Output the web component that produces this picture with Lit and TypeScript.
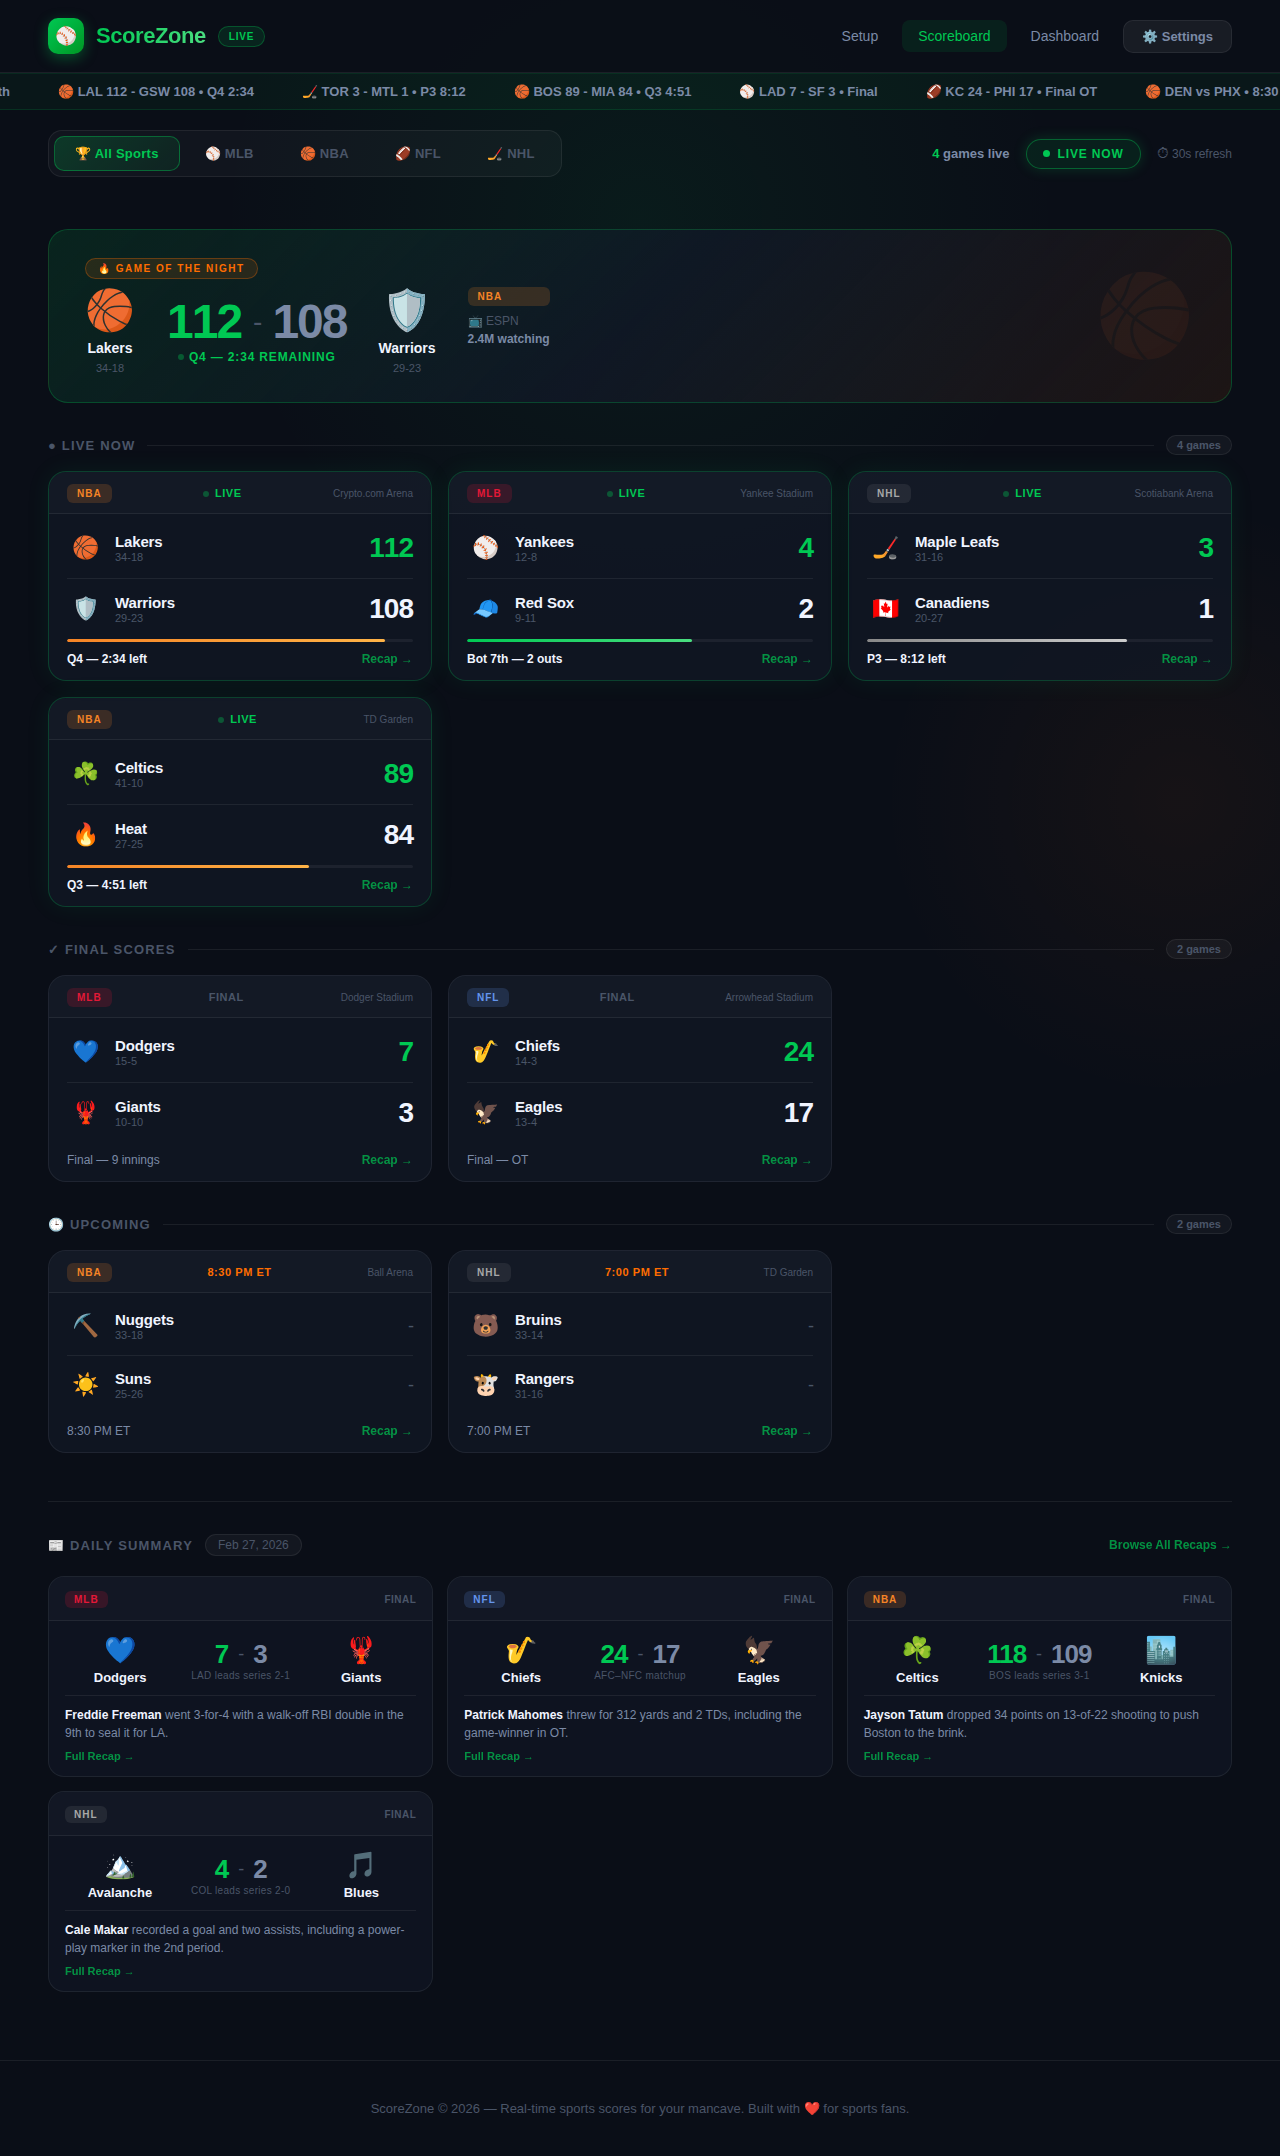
import { LitElement, html, css, nothing } from "lit";
import { customElement, property, state } from "lit/decorators.js";
import { classMap } from "lit/directives/class-map.js";

type League = "NBA" | "MLB" | "NFL" | "NHL";
type Status = "live" | "final" | "upcoming";

interface Team {
  icon: string;
  name: string;
  record?: string;
  score?: number;
}

interface Game {
  league: League;
  status: Status;
  label: string;
  venue: string;
  detail: string;
  progress?: number;
  teams: [Team, Team];
}

interface Recap {
  league: League;
  teams: [Team, Team];
  series: string;
  player: string;
  text: string;
}

const TICKER = [
  "⚾ NYY 4 - BOS 2 • Bot 7th",
  "🏀 LAL 112 - GSW 108 • Q4 2:34",
  "🏒 TOR 3 - MTL 1 • P3 8:12",
  "🏀 BOS 89 - MIA 84 • Q3 4:51",
  "⚾ LAD 7 - SF 3 • Final",
  "🏈 KC 24 - PHI 17 • Final OT",
  "🏀 DEN vs PHX • 8:30 PM ET",
];

const TABS = ["🏆 All Sports", "⚾ MLB", "🏀 NBA", "🏈 NFL", "🏒 NHL"];

const GAMES: Game[] = [
  {
    league: "NBA", status: "live", label: "LIVE", venue: "Crypto.com Arena", detail: "Q4 — 2:34 left", progress: 92,
    teams: [
      { icon: "🏀", name: "Lakers", record: "34-18", score: 112 },
      { icon: "🛡️", name: "Warriors", record: "29-23", score: 108 },
    ],
  },
  {
    league: "MLB", status: "live", label: "LIVE", venue: "Yankee Stadium", detail: "Bot 7th — 2 outs", progress: 65,
    teams: [
      { icon: "⚾", name: "Yankees", record: "12-8", score: 4 },
      { icon: "🧢", name: "Red Sox", record: "9-11", score: 2 },
    ],
  },
  {
    league: "NHL", status: "live", label: "LIVE", venue: "Scotiabank Arena", detail: "P3 — 8:12 left", progress: 75,
    teams: [
      { icon: "🏒", name: "Maple Leafs", record: "31-16", score: 3 },
      { icon: "🇨🇦", name: "Canadiens", record: "20-27", score: 1 },
    ],
  },
  {
    league: "NBA", status: "live", label: "LIVE", venue: "TD Garden", detail: "Q3 — 4:51 left", progress: 70,
    teams: [
      { icon: "☘️", name: "Celtics", record: "41-10", score: 89 },
      { icon: "🔥", name: "Heat", record: "27-25", score: 84 },
    ],
  },
  {
    league: "MLB", status: "final", label: "FINAL", venue: "Dodger Stadium", detail: "Final — 9 innings",
    teams: [
      { icon: "💙", name: "Dodgers", record: "15-5", score: 7 },
      { icon: "🦞", name: "Giants", record: "10-10", score: 3 },
    ],
  },
  {
    league: "NFL", status: "final", label: "FINAL", venue: "Arrowhead Stadium", detail: "Final — OT",
    teams: [
      { icon: "🎷", name: "Chiefs", record: "14-3", score: 24 },
      { icon: "🦅", name: "Eagles", record: "13-4", score: 17 },
    ],
  },
  {
    league: "NBA", status: "upcoming", label: "8:30 PM ET", venue: "Ball Arena", detail: "8:30 PM ET",
    teams: [
      { icon: "⛏️", name: "Nuggets", record: "33-18" },
      { icon: "☀️", name: "Suns", record: "25-26" },
    ],
  },
  {
    league: "NHL", status: "upcoming", label: "7:00 PM ET", venue: "TD Garden", detail: "7:00 PM ET",
    teams: [
      { icon: "🐻", name: "Bruins", record: "33-14" },
      { icon: "🐮", name: "Rangers", record: "31-16" },
    ],
  },
];

const SECTIONS: { status: Status; title: string }[] = [
  { status: "live", title: "● LIVE NOW" },
  { status: "final", title: "✓ FINAL SCORES" },
  { status: "upcoming", title: "🕒 UPCOMING" },
];

const RECAPS: Recap[] = [
  {
    league: "MLB", series: "LAD leads series 2-1", player: "Freddie Freeman",
    text: "went 3-for-4 with a walk-off RBI double in the 9th to seal it for LA.",
    teams: [{ icon: "💙", name: "Dodgers", score: 7 }, { icon: "🦞", name: "Giants", score: 3 }],
  },
  {
    league: "NFL", series: "AFC–NFC matchup", player: "Patrick Mahomes",
    text: "threw for 312 yards and 2 TDs, including the game-winner in OT.",
    teams: [{ icon: "🎷", name: "Chiefs", score: 24 }, { icon: "🦅", name: "Eagles", score: 17 }],
  },
  {
    league: "NBA", series: "BOS leads series 3-1", player: "Jayson Tatum",
    text: "dropped 34 points on 13-of-22 shooting to push Boston to the brink.",
    teams: [{ icon: "☘️", name: "Celtics", score: 118 }, { icon: "🏙️", name: "Knicks", score: 109 }],
  },
  {
    league: "NHL", series: "COL leads series 2-0", player: "Cale Makar",
    text: "recorded a goal and two assists, including a power-play marker in the 2nd period.",
    teams: [{ icon: "🏔️", name: "Avalanche", score: 4 }, { icon: "🎵", name: "Blues", score: 2 }],
  },
];

const shared = css`
  *, *::before, *::after { box-sizing: border-box; }
  h1, h2, h3, p { margin: 0; font: inherit; }
  a { color: inherit; text-decoration: none; }
  button { font: inherit; color: inherit; cursor: pointer; margin: 0; }
  .tag {
    display: block;
    padding: 4px 10px;
    border-radius: 6px;
    font-size: 10px;
    line-height: 11px;
    font-weight: 700;
    letter-spacing: 1px;
  }
  .tag.nba { color: #f58426; background: rgba(245, 132, 38, 0.18); }
  .tag.mlb { color: #e31837; background: rgba(227, 24, 55, 0.18); }
  .tag.nfl { color: #6495ed; background: rgba(100, 149, 237, 0.18); }
  .tag.nhl { color: #a8a8a8; background: rgba(168, 168, 168, 0.12); }
  .dot {
    display: block;
    width: 6px;
    height: 6px;
    border-radius: 50%;
    background: var(--green);
    opacity: 0.35;
  }
`;

@customElement("game-card")
export class GameCard extends LitElement {
  @property({ attribute: false }) game!: Game;

  static styles = [
    shared,
    css`
      :host { display: block; }
      .card {
        border: 1px solid var(--border);
        border-radius: 18px;
        background: var(--card);
        overflow: hidden;
      }
      .card.live {
        border-color: rgba(0, 200, 83, 0.25);
        box-shadow: 0 0 24px rgba(0, 200, 83, 0.08);
      }
      .head {
        display: flex;
        align-items: center;
        justify-content: space-between;
        padding: 12px 18px 10px;
        background: rgba(255, 255, 255, 0.02);
        border-bottom: 1px solid var(--border);
      }
      .status {
        display: flex;
        align-items: center;
        gap: 6px;
        font-size: 11px;
        line-height: 13px;
        font-weight: 700;
        letter-spacing: 0.05em;
        color: var(--muted);
      }
      .live .status { color: var(--green); }
      .upcoming .status { color: var(--orange); }
      .venue { font-size: 10px; line-height: 11px; color: var(--muted); }
      .body { padding: 4px 18px 0; }
      .row {
        display: flex;
        align-items: center;
        gap: 12px;
        padding: 14px 0;
      }
      .row + .row { border-top: 1px solid var(--border); }
      .icon { width: 36px; font-size: 22px; line-height: 28px; text-align: center; }
      .who { flex: 1; }
      .name {
        font-size: 15px;
        line-height: 17px;
        font-weight: 700;
        letter-spacing: -0.01em;
        color: var(--text);
      }
      .record { margin-top: 2px; font-size: 11px; line-height: 11px; color: var(--muted); }
      .score {
        font-size: 28px;
        line-height: 32px;
        font-weight: 700;
        letter-spacing: -1px;
        font-kerning: none;
        font-variant-numeric: tabular-nums;
        color: var(--text);
      }
      .score.win { color: var(--green); }
      .score.none { font-size: 18px; line-height: 20px; font-weight: 400; color: var(--muted); }
      .track {
        height: 3px;
        margin: 0 18px;
        border-radius: 2px;
        background: rgba(255, 255, 255, 0.06);
        overflow: hidden;
      }
      .fill { height: 100%; border-radius: 2px; }
      .fill.nba { background: linear-gradient(90deg, #f58426, #ffb347); }
      .fill.mlb { background: linear-gradient(90deg, #00c853, #4ade80); }
      .fill.nfl { background: linear-gradient(90deg, #6495ed, #a5c3ff); }
      .fill.nhl { background: linear-gradient(90deg, #888888, #cccccc); }
      .foot {
        display: flex;
        justify-content: space-between;
        padding: 10px 18px 14px;
        font-size: 12px;
        line-height: 14px;
        color: var(--soft);
      }
      .live .foot { font-weight: 700; color: var(--text); }
      .foot .link { font-weight: 700; color: var(--green); opacity: 0.7; }
    `,
  ];

  render() {
    const g = this.game;
    const league = g.league.toLowerCase();
    return html`
      <article class=${classMap({ card: true, [g.status]: true })}>
        <header class="head">
          <span class="tag ${league}">${g.league}</span>
          <span class="status">${g.status === "live" ? html`<i class="dot"></i>` : nothing}${g.label}</span>
          <span class="venue">${g.venue}</span>
        </header>
        <div class="body">
          ${g.teams.map(
            (t, i) => html`
              <div class="row">
                <span class="icon">${t.icon}</span>
                <div class="who">
                  <h3 class="name">${t.name}</h3>
                  <p class="record">${t.record}</p>
                </div>
                <span class=${classMap({ score: true, win: i === 0 && t.score !== undefined, none: t.score === undefined })}
                  >${t.score ?? "-"}</span>
              </div>
            `
          )}
        </div>
        ${g.progress === undefined
          ? nothing
          : html`<div class="track"><div class="fill ${league}" style="width:${g.progress}%"></div></div>`}
        <footer class="foot">
          <span>${g.detail}</span>
          <a class="link" href="#recap">Recap →</a>
        </footer>
      </article>
    `;
  }
}

@customElement("recap-card")
export class RecapCard extends LitElement {
  @property({ attribute: false }) recap!: Recap;

  static styles = [
    shared,
    css`
      :host { display: block; }
      .card {
        border: 1px solid var(--border);
        border-radius: 16px;
        background: rgba(17, 24, 39, 0.6);
        overflow: hidden;
      }
      .head {
        display: flex;
        align-items: center;
        justify-content: space-between;
        padding: 14px 16px 12px;
        background: rgba(255, 255, 255, 0.02);
        border-bottom: 1px solid var(--border);
      }
      .tag { padding: 3px 9px; }
      .state {
        font-size: 10px;
        line-height: 11px;
        font-weight: 700;
        letter-spacing: 0.05em;
        color: var(--muted);
      }
      .body { padding: 14px 16px; }
      .match {
        display: flex;
        align-items: center;
        gap: 16px;
        padding-bottom: 10px;
        border-bottom: 1px solid var(--border);
      }
      .team { flex: 1; text-align: center; }
      .icon { display: block; font-size: 26px; line-height: 31px; margin-bottom: 4px; }
      .name { font-size: 13px; line-height: 15px; font-weight: 700; color: var(--text); }
      .center { text-align: center; }
      .scores {
        display: flex;
        align-items: center;
        justify-content: center;
        gap: 10px;
        margin-bottom: 2px;
        font-size: 26px;
        line-height: 28px;
        font-weight: 700;
        letter-spacing: -1px;
        color: var(--soft);
      }
      .win { color: var(--green); }
      .dash { font-size: 18px; font-weight: 400; color: var(--muted); }
      .series { font-size: 10px; line-height: 11px; letter-spacing: 0.03em; color: var(--muted); }
      .text { padding-top: 10px; font-size: 12px; line-height: 18px; color: var(--soft); }
      .player { font-weight: 700; color: var(--text); }
      .link {
        display: block;
        margin-top: 8px;
        font-size: 11px;
        line-height: 12px;
        font-weight: 700;
        color: var(--green);
        opacity: 0.7;
      }
    `,
  ];

  render() {
    const { league, teams: [a, b], series, player, text } = this.recap;
    return html`
      <article class="card">
        <header class="head">
          <span class="tag ${league.toLowerCase()}">${league}</span>
          <span class="state">FINAL</span>
        </header>
        <div class="body">
          <div class="match">
            <div class="team"><span class="icon">${a.icon}</span><h3 class="name">${a.name}</h3></div>
            <div class="center">
              <div class="scores">
                <span class="win">${a.score}</span><span class="dash">-</span><span>${b.score}</span>
              </div>
              <p class="series">${series}</p>
            </div>
            <div class="team"><span class="icon">${b.icon}</span><h3 class="name">${b.name}</h3></div>
          </div>
          <p class="text"><strong class="player">${player}</strong> ${text}</p>
          <a class="link" href="#recap">Full Recap →</a>
        </div>
      </article>
    `;
  }
}

@customElement("app-root")
export class AppRoot extends LitElement {
  @state() private tab = 0;

  static styles = [
    shared,
    css`
      :host {
        --green: #00c853;
        --orange: #ff6d00;
        --text: #f0f4ff;
        --soft: #7b8aa6;
        --muted: #4a5568;
        --border: rgba(255, 255, 255, 0.07);
        --card: rgba(17, 24, 39, 0.7);
        display: block;
        min-height: 100vh;
        font-family: "Liberation Sans", Arial, sans-serif;
        font-size: 14px;
        line-height: 16px;
        color: var(--text);
        background:
          radial-gradient(circle 420px at 50% 220px, rgba(0, 200, 83, 0.07), transparent),
          radial-gradient(circle 300px at calc(100% - 100px) 800px, rgba(255, 109, 0, 0.05), transparent),
          #0a0e17;
      }

      .top {
        display: flex;
        align-items: center;
        justify-content: space-between;
        padding: 18px 48px;
        background: rgba(10, 14, 23, 0.9);
        border-bottom: 1px solid var(--border);
      }
      .brand { display: flex; align-items: center; gap: 12px; }
      .logo {
        display: grid;
        place-items: center;
        width: 36px;
        height: 36px;
        border-radius: 10px;
        font-size: 18px;
        line-height: 22px;
        background: linear-gradient(135deg, #00c853, #009624);
        box-shadow: 0 4px 14px rgba(0, 200, 83, 0.35);
      }
      .title {
        font-size: 22px;
        line-height: 26px;
        font-weight: 700;
        letter-spacing: -0.02em;
        color: transparent;
        background: linear-gradient(90deg, #00c853, #4ade80);
        background-clip: text;
        -webkit-background-clip: text;
      }
      .chip {
        padding: 4px 10px;
        border: 1px solid rgba(0, 200, 83, 0.3);
        border-radius: 20px;
        font-size: 10px;
        line-height: 11px;
        font-weight: 700;
        letter-spacing: 0.08em;
        color: var(--green);
        background: rgba(0, 200, 83, 0.12);
      }
      .nav { display: flex; align-items: center; gap: 8px; }
      .navlink { padding: 8px 16px; border-radius: 8px; color: var(--soft); }
      .navlink.on { color: var(--green); background: rgba(0, 200, 83, 0.1); }
      .settings {
        padding: 8px 18px;
        border: 1px solid var(--border);
        border-radius: 10px;
        font-size: 13px;
        line-height: 15px;
        font-weight: 700;
        color: var(--soft);
        background: rgba(255, 255, 255, 0.06);
      }

      .ticker {
        overflow: hidden;
        padding: 10px 0;
        border-top: 1px solid rgba(0, 200, 83, 0.1);
        border-bottom: 1px solid rgba(0, 200, 83, 0.15);
        background: rgba(0, 200, 83, 0.05);
      }
      .reel {
        display: flex;
        gap: 48px;
        width: max-content;
        transform: translateX(-154px);
        font-size: 13px;
        line-height: 15px;
        font-weight: 700;
        white-space: nowrap;
        color: var(--soft);
      }

      .main { padding: 20px 48px 68px; }
      .bar { display: flex; align-items: center; justify-content: space-between; margin-bottom: 52px; }
      .tabs {
        display: flex;
        gap: 4px;
        padding: 5px;
        border: 1px solid var(--border);
        border-radius: 14px;
        background: rgba(255, 255, 255, 0.03);
      }
      .tab {
        padding: 9px 20px;
        border: 1px solid transparent;
        border-radius: 10px;
        font-size: 13px;
        line-height: 15px;
        font-weight: 700;
        letter-spacing: 0.02em;
        color: var(--muted);
        background: none;
      }
      .tab.on {
        color: var(--green);
        border-color: rgba(0, 200, 83, 0.4);
        background: linear-gradient(135deg, rgba(0, 200, 83, 0.2), rgba(0, 200, 83, 0.08));
      }
      .info { display: flex; align-items: center; gap: 16px; }
      .count { font-size: 13px; line-height: 15px; font-weight: 700; color: var(--soft); }
      .num { color: var(--green); }
      .pill {
        display: flex;
        align-items: center;
        gap: 8px;
        padding: 7px 16px;
        border: 1px solid rgba(0, 200, 83, 0.4);
        border-radius: 20px;
        font-size: 12px;
        line-height: 14px;
        font-weight: 700;
        letter-spacing: 0.07em;
        color: var(--green);
        background: rgba(0, 200, 83, 0.1);
        box-shadow: 0 0 14px rgba(0, 200, 83, 0.2);
      }
      .pill .dot { width: 7px; height: 7px; opacity: 1; }
      .refresh { font-size: 12px; line-height: 14px; color: var(--muted); }
      .watch { font-size: 15px; line-height: 14px; }

      .hero {
        position: relative;
        padding: 28px 36px;
        border: 1px solid rgba(0, 200, 83, 0.25);
        border-radius: 20px;
        background: linear-gradient(135deg, rgba(0, 200, 83, 0.12), rgba(17, 24, 39, 0.8) 50%, rgba(255, 109, 0, 0.08));
      }
      .ghost {
        position: absolute;
        right: 36px;
        top: 50%;
        transform: translateY(-50%);
        font-size: 80px;
        line-height: 96px;
        opacity: 0.07;
      }
      .badge {
        width: max-content;
        margin-bottom: 8px;
        padding: 4px 12px;
        border: 1px solid rgba(255, 109, 0, 0.3);
        border-radius: 20px;
        font-size: 10px;
        line-height: 11px;
        font-weight: 700;
        letter-spacing: 0.15em;
        color: var(--orange);
        background: rgba(255, 109, 0, 0.12);
      }
      .duel { display: flex; align-items: center; gap: 32px; }
      .side { text-align: center; }
      .big { display: block; font-size: 40px; line-height: 47px; margin-bottom: 6px; }
      .team { font-size: 14px; line-height: 16px; font-weight: 700; }
      .rec { margin-top: 6px; font-size: 11px; line-height: 12px; color: var(--muted); }
      .nums {
        display: flex;
        align-items: center;
        gap: 12px;
        font-size: 48px;
        line-height: 48px;
        font-weight: 700;
        letter-spacing: -2px;
        font-kerning: none;
        font-variant-numeric: tabular-nums;
        color: var(--soft);
      }
      .dash { font-size: 28px; font-weight: 400; color: var(--muted); }
      .clock {
        display: flex;
        align-items: center;
        justify-content: center;
        gap: 5px;
        margin-top: 4px;
        font-size: 12px;
        line-height: 14px;
        font-weight: 700;
        letter-spacing: 0.07em;
        color: var(--green);
      }
      .meta {
        display: flex;
        flex-direction: column;
        gap: 4px;
        align-self: flex-start;
        font-size: 12px;
        line-height: 14px;
      }
      .tv { padding-top: 4px; color: var(--muted); }
      .watching { font-weight: 700; color: var(--soft); }

      .section { margin-top: 32px; }
      .sechead { display: flex; align-items: center; gap: 12px; margin-bottom: 16px; }
      .h {
        font-size: 13px;
        line-height: 15px;
        font-weight: 700;
        letter-spacing: 0.09em;
        color: var(--muted);
      }
      .rule { flex: 1; height: 1px; background: var(--border); }
      .total {
        padding: 3px 10px;
        border: 1px solid var(--border);
        border-radius: 20px;
        font-size: 11px;
        line-height: 12px;
        font-weight: 700;
        color: var(--muted);
        background: rgba(255, 255, 255, 0.04);
      }
      .grid {
        display: grid;
        grid-template-columns: repeat(auto-fill, minmax(340px, 1fr));
        gap: 16px;
      }

      .summary { margin-top: 48px; padding-top: 32px; border-top: 1px solid var(--border); }
      .sumhead { display: flex; align-items: center; gap: 12px; margin-bottom: 20px; }
      .date {
        padding: 3px 12px;
        border: 1px solid var(--border);
        border-radius: 20px;
        font-size: 12px;
        line-height: 14px;
        color: var(--muted);
        background: rgba(255, 255, 255, 0.04);
      }
      .browse {
        margin-left: auto;
        font-size: 12px;
        line-height: 14px;
        font-weight: 700;
        color: var(--green);
        opacity: 0.7;
      }
      .recaps { gap: 14px; }

      .footer {
        padding: 40px 48px;
        border-top: 1px solid var(--border);
        font-size: 13px;
        line-height: 15px;
        text-align: center;
        color: var(--muted);
      }
    `,
  ];

  render() {
    return html`
      <header class="top">
        <div class="brand">
          <span class="logo">⚾</span>
          <h1 class="title">ScoreZone</h1>
          <span class="chip">LIVE</span>
        </div>
        <nav class="nav">
          <a class="navlink" href="#setup">Setup</a>
          <a class="navlink on" href="#scoreboard">Scoreboard</a>
          <a class="navlink" href="#dashboard">Dashboard</a>
          <button class="settings" type="button">⚙️ Settings</button>
        </nav>
      </header>

      <div class="ticker"><div class="reel">${TICKER.map((t) => html`<span>${t}</span>`)}</div></div>

      <main class="main">
        <div class="bar">
          <div class="tabs">
            ${TABS.map(
              (t, i) => html`
                <button
                  type="button"
                  class=${classMap({ tab: true, on: i === this.tab })}
                  aria-pressed=${i === this.tab ? "true" : "false"}
                  @click=${() => (this.tab = i)}
                >${t}</button>
              `
            )}
          </div>
          <div class="info">
            <span class="count"><span class="num">4</span> games live</span>
            <span class="pill"><i class="dot"></i>LIVE NOW</span>
            <span class="refresh"><span class="watch">⏱</span> 30s refresh</span>
          </div>
        </div>

        <section class="hero">
          <span class="ghost" aria-hidden="true">🏀</span>
          <div class="badge">🔥 GAME OF THE NIGHT</div>
          <div class="duel">
            <div class="side">
              <span class="big">🏀</span>
              <h2 class="team">Lakers</h2>
              <p class="rec">34-18</p>
            </div>
            <div>
              <div class="nums"><span class="num">112</span><span class="dash">-</span><span>108</span></div>
              <p class="clock"><i class="dot"></i>Q4 — 2:34 REMAINING</p>
            </div>
            <div class="side">
              <span class="big">🛡️</span>
              <h2 class="team">Warriors</h2>
              <p class="rec">29-23</p>
            </div>
            <div class="meta">
              <span class="tag nba">NBA</span>
              <span class="tv">📺 ESPN</span>
              <span class="watching">2.4M watching</span>
            </div>
          </div>
        </section>

        ${SECTIONS.map(({ status, title }) => {
          const games = GAMES.filter((g) => g.status === status);
          return html`
            <section class="section">
              <div class="sechead">
                <h2 class="h">${title}</h2>
                <span class="rule"></span>
                <span class="total">${games.length} games</span>
              </div>
              <div class="grid">${games.map((g) => html`<game-card .game=${g}></game-card>`)}</div>
            </section>
          `;
        })}

        <section class="summary">
          <div class="sumhead">
            <h2 class="h">📰 DAILY SUMMARY</h2>
            <span class="date">Feb 27, 2026</span>
            <a class="browse" href="#recaps">Browse All Recaps →</a>
          </div>
          <div class="grid recaps">${RECAPS.map((r) => html`<recap-card .recap=${r}></recap-card>`)}</div>
        </section>
      </main>

      <footer class="footer">
        ScoreZone © 2026 — Real-time sports scores for your mancave. Built with ❤️ for sports fans.
      </footer>
    `;
  }
}
